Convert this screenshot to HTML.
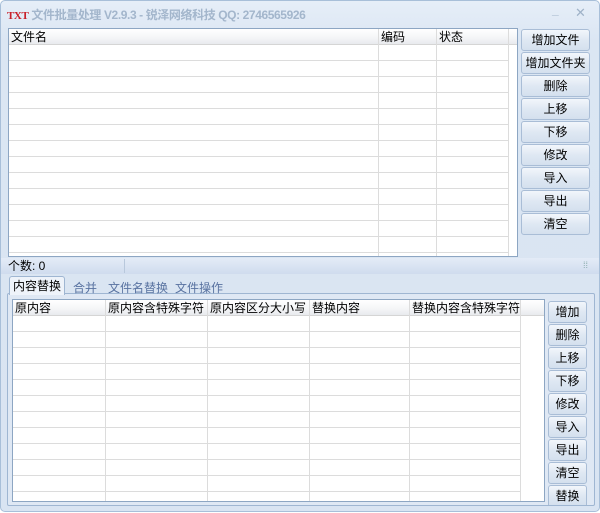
<!DOCTYPE html><html><head><meta charset="utf-8"><style>
*{margin:0;padding:0;box-sizing:border-box}
body{width:600px;height:513px;overflow:hidden;background:#fff;font-family:"Liberation Sans","Noto Sans CJK SC",sans-serif;font-size:12px;color:#000;position:relative}
.win{position:absolute;left:0;top:0;width:600px;height:512px;background:linear-gradient(#e6eef8,#dbe6f3 40px,#d9e4f2);border:1px solid #a8bfd9;border-radius:5px}
.a{position:absolute}
.title{left:6px;top:5px;color:#a3b6cc;font-weight:bold;font-size:12px;white-space:nowrap;letter-spacing:-0.4px}
.title b{color:#c8202a;font-family:"Liberation Serif",serif;font-size:11px;margin-right:3px}
.grid{position:absolute;background:#fff;border:1px solid #8da6c3;overflow:hidden}
.hd{position:absolute;left:0;top:0;right:0;height:16px;background:linear-gradient(#fff,#f4f5f7 60%,#e8eaee);border-bottom:1px solid #d5d5d5}
.col{position:absolute;top:0;bottom:0;border-right:1px solid #dcdcdc}
.ht{position:absolute;top:0;line-height:16px;padding-left:2px;white-space:nowrap}
.row{position:absolute;left:0;right:0;height:1px;background:#dcdcdc}
.btn{position:absolute;height:22px;border:1px solid #a9bdd6;border-radius:3px;background:linear-gradient(#f2f6fb,#dfe8f3 50%,#d4e0ee);text-align:center;line-height:20px;font-size:12px}
.tab{color:#5872a0}
</style></head><body><div class="win">
<div class="a title"><b>TXT</b>文件批量处理 V2.9.3 - 锐泽网络科技 QQ: 2746565926</div>
<div class="a" style="left:551px;top:2px;color:#9fb2c8;font-weight:bold">_</div>
<div class="a" style="left:574px;top:4px;color:#9fb2c8;font-size:13px">✕</div>

<div class="grid" style="left:7px;top:27px;width:510px;height:229px">
<div class="hd"></div>
<div class="col" style="left:0;width:370px"></div>
<div class="col" style="left:370px;width:58px"></div>
<div class="col" style="left:428px;width:72px"></div>
<div class="ht" style="left:0">文件名</div><div class="ht" style="left:370px">编码</div><div class="ht" style="left:428px">状态</div>
<div id="r1"></div>
</div>

<div class="btn" style="left:520px;top:28px;width:69px">增加文件</div>
<div class="btn" style="left:520px;top:51px;width:69px">增加文件夹</div>
<div class="btn" style="left:520px;top:74px;width:69px">删除</div>
<div class="btn" style="left:520px;top:97px;width:69px">上移</div>
<div class="btn" style="left:520px;top:120px;width:69px">下移</div>
<div class="btn" style="left:520px;top:143px;width:69px">修改</div>
<div class="btn" style="left:520px;top:166px;width:69px">导入</div>
<div class="btn" style="left:520px;top:189px;width:69px">导出</div>
<div class="btn" style="left:520px;top:212px;width:69px">清空</div>

<div class="a" style="left:0;top:257px;width:598px;height:16px;background:linear-gradient(#e4ecf7,#cfdcee)"></div>
<div class="a" style="left:123px;top:258px;width:1px;height:14px;background:#b8c8dc"></div>
<div class="a" style="left:7px;top:258px;line-height:15px">个数: 0</div>
<div class="a" style="left:582px;top:259px;color:#8aa;font-size:9px">⁞⁞</div>

<div class="a" style="left:6px;top:292px;width:588px;height:213px;border:1px solid #9fb6d2;border-radius:2px;background:#dfe8f4"></div>
<div class="a" style="left:8px;top:275px;width:56px;height:19px;border:1px solid #9fb6d2;border-bottom:none;border-radius:3px 3px 0 0;background:#eef3fa;text-align:center;line-height:18px">内容替换</div>
<div class="a tab" style="left:72px;top:278px">合并</div>
<div class="a tab" style="left:107px;top:278px">文件名替换</div>
<div class="a tab" style="left:174px;top:278px">文件操作</div>

<div class="grid" style="left:11px;top:298px;width:533px;height:203px">
<div class="hd"></div>
<div class="col" style="left:0;width:93px"></div>
<div class="col" style="left:93px;width:102px"></div>
<div class="col" style="left:195px;width:102px"></div>
<div class="col" style="left:297px;width:100px"></div>
<div class="col" style="left:397px;width:111px"></div>
<div class="ht" style="left:0">原内容</div><div class="ht" style="left:93px">原内容含特殊字符</div><div class="ht" style="left:195px">原内容区分大小写</div><div class="ht" style="left:297px">替换内容</div><div class="ht" style="left:397px">替换内容含特殊字符</div>
<div id="r2"></div>
</div>

<div class="btn" style="left:547px;top:300px;width:39px">增加</div>
<div class="btn" style="left:547px;top:323px;width:39px">删除</div>
<div class="btn" style="left:547px;top:346px;width:39px">上移</div>
<div class="btn" style="left:547px;top:369px;width:39px">下移</div>
<div class="btn" style="left:547px;top:392px;width:39px">修改</div>
<div class="btn" style="left:547px;top:415px;width:39px">导入</div>
<div class="btn" style="left:547px;top:438px;width:39px">导出</div>
<div class="btn" style="left:547px;top:461px;width:39px">清空</div>
<div class="btn" style="left:547px;top:484px;width:39px;height:20px;border-bottom:none;border-radius:3px 3px 0 0">替换</div>
</div>
<script>
function rows(id,w,start,n,step){var e=document.getElementById(id),h='';for(var i=0;i<n;i++)h+='<div class="row" style="top:'+(start+i*step)+'px;width:'+w+'px"></div>';e.innerHTML=h;}
rows('r1',500,31,14,16);rows('r2',508,31,12,16);
</script>
</body></html>
